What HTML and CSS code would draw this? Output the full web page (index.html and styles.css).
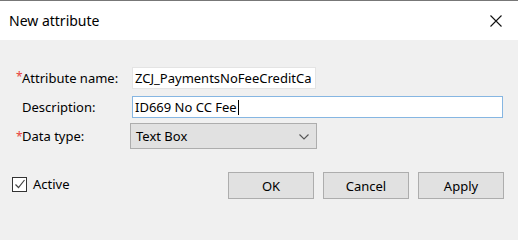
FILE: index.html
```html
<!DOCTYPE html>
<html>
<head>
<meta charset="utf-8">
<link rel="stylesheet" href="styles.css">
</head>
<body>
<div class="window">
  <div class="titlebar">
    <span class="title">New attribute</span>
    <svg class="close" width="12" height="12" viewBox="0 0 12 12"><path d="M0.5 0.5 L11.5 11.5 M11.5 0.5 L0.5 11.5" stroke="#111" stroke-width="1.1" fill="none"/></svg>
  </div>
  <div class="form">
    <div class="row r1">
      <label class="label"><span class="req">*</span>Attribute name:</label>
      <div class="field short">ZCJ_PaymentsNoFeeCreditCa</div>
    </div>
    <div class="row r2">
      <label class="label"><span class="req"></span>Description:</label>
      <div class="field long focus">ID669 No CC Fee<span class="caret"></span></div>
    </div>
    <div class="row r3">
      <label class="label"><span class="req">*</span>Data type:</label>
      <div class="select"><span>Text Box</span>
        <svg class="chev" width="10" height="6" viewBox="0 0 10 6"><path d="M0.5 0.5 L5 5 L9.5 0.5" stroke="#555" stroke-width="1.1" fill="none"/></svg>
      </div>
    </div>
  </div>
  <div class="footer">
    <div class="check">
      <span class="box"><svg width="12" height="12" viewBox="0 0 12 12"><path d="M1.5 6.5 L4.5 9.5 L10.5 2" stroke="#444" stroke-width="1.2" fill="none"/></svg></span>
      <span>Active</span>
    </div>
    <div class="buttons">
      <button class="btn">OK</button>
      <button class="btn">Cancel</button>
      <button class="btn">Apply</button>
    </div>
  </div>
</div>
</body>
</html>
```
FILE: styles.css
```css
html, body {
  margin: 0;
  padding: 0;
}
body {
  width: 518px;
  height: 211px;
  background: #f0f0f0;
  font-family: "Noto Sans", "Open Sans", sans-serif;
  font-size: 13px;
  color: #000;
  overflow: hidden;
}
.window {
  border-top: 1px solid #777;
}
.titlebar {
  height: 39px;
  background: #fff;
  display: flex;
  align-items: center;
  justify-content: space-between;
  padding: 0 16px 0 9px;
}
.title {
  font-size: 14px;
  color: #000;
  margin-top: -1px;
}
.close {
  margin-top: 1px;
}
.form {
  padding: 27px 0 0 16px;
}
.row {
  display: flex;
  align-items: center;
}
.r1 { height: 22px; }
.r2 { height: 22px; margin-top: 7px; }
.r3 { height: 26px; margin-top: 5px; }
.label {
  width: 116px;
  display: flex;
  align-items: center;
}
.req {
  width: 6px;
  color: #e8403a;
  font-size: 12px;
  align-self: flex-start;
  margin-top: 1px;
  line-height: 14px;
}
.r3 .req { margin-top: 3px; }
.field {
  box-sizing: border-box;
  height: 22px;
  background: #fff;
  border: 1px solid #e4e4e4;
  padding: 0 2px;
  display: flex;
  align-items: center;
  white-space: nowrap;
  overflow: hidden;
}
.short { width: 184px; }
.long { width: 371px; }
.focus { border-color: #86b6e2; }
.caret {
  display: inline-block;
  width: 1px;
  height: 15px;
  background: #000;
  margin-left: 1px;
}
.select {
  box-sizing: border-box;
  width: 187px;
  height: 26px;
  margin-left: -2px;
  background: #e1e1e1;
  border: 1px solid #adadad;
  display: flex;
  align-items: center;
  justify-content: space-between;
  padding: 0 7px 0 5px;
}
.chev { margin-top: 1px; }
.footer {
  display: flex;
  align-items: center;
  justify-content: space-between;
  padding: 23px 14px 0 12px;
}
.check {
  display: flex;
  align-items: center;
  gap: 6px;
  margin-top: -3px;
}
.box {
  box-sizing: border-box;
  width: 15px;
  height: 15px;
  border: 1px solid #333;
  background: #fff;
  display: flex;
  align-items: center;
  justify-content: center;
}
.buttons {
  display: flex;
  gap: 9px;
}
.btn {
  box-sizing: border-box;
  width: 86px;
  height: 27px;
  background: #e1e1e1;
  border: 1px solid #adadad;
  font-family: "Noto Sans", "Open Sans", sans-serif;
  font-size: 13px;
  color: #000;
  padding: 0;
  margin: 0;
}
```
